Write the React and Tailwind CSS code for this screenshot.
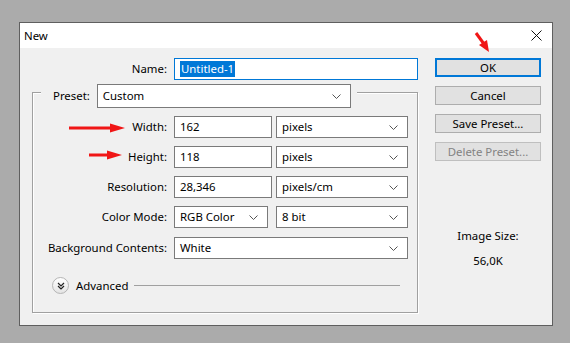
import React from 'react';

const font = { fontFamily: '"Noto Sans", "Liberation Sans", sans-serif' };

function Chevron() {
  return (
    <svg width="9" height="5" viewBox="0 0 9 5" className="shrink-0">
      <path d="M0.5 0.5 L4.5 4.5 L8.5 0.5" fill="none" stroke="#555" strokeWidth="1" />
    </svg>
  );
}

function Select({ value, className }) {
  return (
    <div className={`flex items-center justify-between h-[22px] bg-white border border-[#7a7a7a] pl-[5px] pr-[9px] ${className}`}>
      <span>{value}</span>
      <Chevron />
    </div>
  );
}

function Input({ value, className }) {
  return (
    <div className={`flex items-center h-[22px] bg-white border border-[#7a7a7a] pl-[5px] ${className}`}>
      {value}
    </div>
  );
}

function Row({ label, children }) {
  return (
    <div className="flex items-center h-[22px]">
      <div className="w-[135px] text-right pr-[1px]">{label}</div>
      <div className="flex items-center gap-[4px] ml-[6px]">{children}</div>
    </div>
  );
}

function Button({ children, primary, disabled }) {
  return (
    <div
      className={`flex items-center justify-center h-[19px] w-[106px] bg-[#e1e1e1] ${
        primary ? 'border-2 border-[#0078d7]' : 'border border-[#adadad]'
      } ${disabled ? 'bg-[#cccccc] border-[#bfbfbf] text-[#838383]' : 'text-black'}`}
    >
      {children}
    </div>
  );
}

export default function App() {
  return (
    <div className="relative w-[570px] h-[343px] bg-[#ababab] pt-[22px] pl-[19px] text-[11.4px] text-black overflow-hidden" style={font}>
      {/* dialog */}
      <div className="w-[534px] h-[304px] border border-[#5f5f5f] bg-[#f0f0f0] flex flex-col">
        <div className="h-[25px] bg-white flex items-center justify-between pl-[4px] pr-[10px] shrink-0">
          <span>New</span>
          <svg width="11" height="11" viewBox="0 0 11 11">
            <path d="M0.5 0.5 L10.5 10.5 M10.5 0.5 L0.5 10.5" stroke="#111" strokeWidth="1" />
          </svg>
        </div>

        <div className="flex flex-1">
          {/* left column */}
          <div className="w-[414px] flex flex-col">
            <div className="flex items-center mt-[10px] h-[22px]">
              <div className="w-[148px] text-right pr-[1px]">Name:</div>
              <div className="ml-[6px] w-[244px] h-[22px] border border-[#0078d7] bg-white flex items-center pl-[5px]">
                <span className="bg-[#0078d7] text-white px-[1px] leading-[16px]">Untitled-1</span>
              </div>
            </div>

            {/* group box */}
            <div className="ml-[12px] mt-[12px] w-[386px] h-[221px] border border-[#a0a0a0] shadow-[inset_1px_1px_0_#fff,1px_1px_0_#fff] flex flex-col">
              <div className="flex items-center -mt-[9px] ml-[8px] w-[316px] bg-[#f0f0f0] pl-[12px] h-[24px]">
                <span>Preset:</span>
                <Select value="Custom" className="ml-[7px] w-[254px] h-[24px]" />
              </div>

              <div className="flex flex-col gap-[8px] mt-[8px]">
                <Row label="Width:">
                  <Input value="162" className="w-[98px]" />
                  <Select value="pixels" className="w-[132px]" />
                </Row>
                <Row label="Height:">
                  <Input value="118" className="w-[98px]" />
                  <Select value="pixels" className="w-[132px]" />
                </Row>
                <Row label="Resolution:">
                  <Input value="28,346" className="w-[98px]" />
                  <Select value="pixels/cm" className="w-[132px]" />
                </Row>
                <Row label="Color Mode:">
                  <Select value="RGB Color" className="w-[94px] mr-[4px]" />
                  <Select value="8 bit" className="w-[132px]" />
                </Row>
                <div className="mt-[1px]">
                  <Row label="Background Contents:">
                    <Select value="White" className="w-[234px]" />
                  </Row>
                </div>
              </div>

              <div className="flex items-center mt-[18px] ml-[19px]">
                <div className="w-[17px] h-[17px] rounded-full border border-[#b5b5b5] bg-gradient-to-b from-white to-[#e4e4e4] flex items-center justify-center">
                  <svg width="8" height="8" viewBox="0 0 8 8">
                    <path d="M1 1 L4 4 L7 1 M1 4 L4 7 L7 4" fill="none" stroke="#222" strokeWidth="1.2" />
                  </svg>
                </div>
                <span className="ml-[7px]">Advanced</span>
                <div className="ml-[6px] w-[266px] h-px bg-[#a0a0a0]" />
              </div>
            </div>
          </div>

          {/* right column */}
          <div className="ml-[1px] flex flex-col">
            <div className="mt-[10px] flex flex-col gap-[9px]">
              <Button primary>OK</Button>
              <Button>Cancel</Button>
              <Button>Save Preset...</Button>
              <Button disabled>Delete Preset...</Button>
            </div>
            <div className="mt-[66px] w-[106px] text-center">Image Size:</div>
            <div className="mt-[8px] w-[106px] text-center">56,0K</div>
          </div>
        </div>
      </div>

      {/* red annotation arrows */}
      <svg className="absolute inset-0 pointer-events-none" width="570" height="343">
        <path d="M69 128 L112 128" stroke="#f01616" strokeWidth="3" />
        <path d="M110 123.5 L125 128 L110 132.5 Z" fill="#f01616" />
        <path d="M89 155 L109 155" stroke="#f01616" strokeWidth="3" />
        <path d="M107 150.5 L122 155 L107 159.5 Z" fill="#f01616" />
        <path d="M476 33 L484 44" stroke="#f01616" strokeWidth="3" />
        <path d="M479 45 L489 52 L487 40 Z" fill="#f01616" />
      </svg>
    </div>
  );
}
